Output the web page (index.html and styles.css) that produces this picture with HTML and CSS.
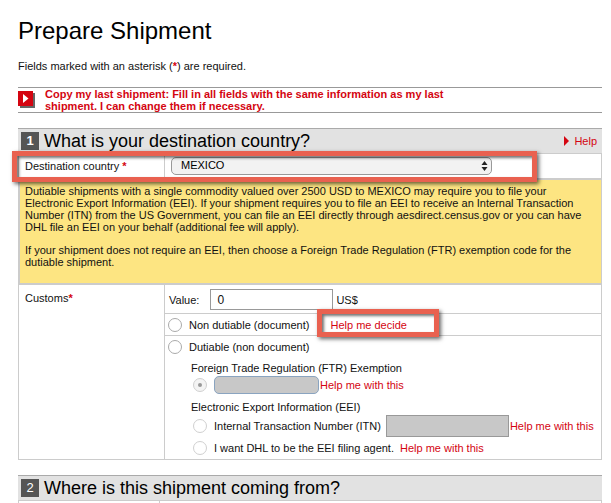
FILE: index.html
```html
<!DOCTYPE html>
<html lang="en">
<head>
    <meta charset="UTF-8">
    <title>Prepare Shipment</title>
    <link rel="stylesheet" href="styles.css">
</head>
<body>
    <h1>Prepare Shipment</h1>
    <p class="note">Fields marked with an asterisk (<span class="req bold">*</span>) are required.</p>

    <div class="copy-bar">
        <span class="arrow-btn">
            <svg width="15" height="15" viewBox="0 0 15 15"><path d="M5 3l5.500 4.500L5 12z" fill="#fff"/></svg>
        </span>
        <span class="copy-text">Copy my last shipment: Fill in all fields with the same information as my last shipment. I can change them if necessary.</span>
    </div>

    <div class="section-head first">
        <span class="num">1</span>
        <h2>What is your destination country?</h2>
        <a class="help-top"><i class="tri"></i>Help</a>
    </div>

    <div class="row dest-row">
        <div class="label">Destination country <span class="req bold">*</span></div>
        <div class="field">
            <div class="select-box">MEXICO
                <svg class="updown" width="7" height="12" viewBox="0 0 7 12"><path d="M3.500 1L6.500 5H.5zM3.500 11L.5 7h6z" fill="#222"/></svg>
            </div>
        </div>
    </div>

    <div class="notice">
        <p>Dutiable shipments with a single commodity valued over 2500 USD to MEXICO may require you to file your Electronic Export Information (EEI). If your shipment requires you to file an EEI to receive an Internal Transaction Number (ITN) from the US Government, you can file an EEI directly through aesdirect.census.gov or you can have DHL file an EEI on your behalf (additional fee will apply).</p>
        <p>If your shipment does not require an EEI, then choose a Foreign Trade Regulation (FTR) exemption code for the dutiable shipment.</p>
    </div>

    <div class="row customs">
        <div class="label">Customs<span class="req bold">*</span></div>
        <div class="field stack">
            <div class="line value-line">
                <span>Value:</span>
                <div class="text-input">0</div>
                <span>US$</span>
            </div>
            <div class="line doc-line">
                <i class="radio"></i>
                <span>Non dutiable (document)</span>
                <a class="help decide">Help me decide</a>
            </div>
            <div class="line dutiable-line">
                <i class="radio"></i>
                <span>Dutiable (non document)</span>
            </div>
            <div class="sub">
                <div class="sub-title">Foreign Trade Regulation (FTR) Exemption</div>
                <div class="line ftr-line">
                    <i class="radio small checked"></i>
                    <div class="gray-select"></div>
                    <a class="help">Help me with this</a>
                </div>
                <div class="sub-title eei">Electronic Export Information (EEI)</div>
                <div class="line itn-line">
                    <i class="radio small"></i>
                    <span>Internal Transaction Number (ITN)</span>
                    <div class="gray-input"></div>
                    <a class="help">Help me with this</a>
                </div>
                <div class="line agent-line">
                    <i class="radio small"></i>
                    <span>I want DHL to be the EEI filing agent.</span>
                    <a class="help">Help me with this</a>
                </div>
            </div>
        </div>
    </div>

    <div class="section-head second">
        <span class="num">2</span>
        <h2>Where is this shipment coming from?</h2>
    </div>
    <div class="row last-row">
        <div class="label"></div>
        <div class="field"></div>
    </div>

    <!-- red annotation boxes from the screenshot -->
    <div class="callout callout-dest"></div>
    <div class="callout callout-help"></div>
</body>
</html>
```

FILE: styles.css
```css
html, body {
    height: 503px;
    overflow: hidden;
}
body {
    position: relative;
    margin: 0;
    padding: 0 9px 0 18px;
    font-family: "Liberation Sans", Arial, sans-serif;
    font-size: 11px;
    color: #111;
    background: #fff;
}
h1 {
    margin: 0;
    padding-top: 15px;
    height: 31px;
    font-size: 24px;
    line-height: 31px;
    font-weight: normal;
    color: #000;
}
.note {
    margin: 0;
    padding-top: 13px;
    line-height: 14px;
}
.req {
    color: #d40511;
}
.bold {
    font-weight: bold;
}
.copy-bar {
    display: flex;
    margin-top: 14px;
    height: 24px;
    border-top: 1px solid #999;
    border-bottom: 1px solid #999;
}
.arrow-btn {
    width: 15px;
    height: 15px;
    margin-top: 3px;
    background: #d40511;
    box-shadow: 2px 2px 0 #666;
}
.arrow-btn svg {
    display: block;
}
.copy-text {
    width: 410px;
    margin-left: 12px;
    font-weight: bold;
    color: #d40511;
    line-height: 12px;
}
.section-head {
    display: flex;
    align-items: center;
    height: 24px;
    margin-top: 15px;
    background: #e2e2e2;
    border-top: 1px solid #aaa;
}
.num {
    width: 18px;
    height: 18px;
    margin-left: 3px;
    background: #555;
    color: #fff;
    font-size: 13px;
    line-height: 18px;
    text-align: center;
    font-weight: bold;
}
.second .num {
    font-weight: normal;
}
.section-head h2 {
    margin: 0 0 0 5px;
    font-size: 18px;
    font-weight: normal;
    color: #000;
}
.help-top {
    margin-left: auto;
    margin-right: 5px;
    color: #d40511;
    display: flex;
    align-items: center;
}
.tri {
    width: 0;
    height: 0;
    margin-right: 5px;
    border-left: 5px solid #d40511;
    border-top: 5px solid transparent;
    border-bottom: 5px solid transparent;
}
.row {
    display: flex;
    border-left: 1px solid #ccc;
    border-right: 1px solid #ccc;
}
.label {
    width: 139px;
    padding: 6px 0 0 6px;
    line-height: 14px;
    border-right: 1px solid #ccc;
}
.field {
    flex: 1;
}
.dest-row {
    height: 24px;
    border-top: 1px solid #ccc;
    border-bottom: 1px solid #ccc;
}
.dest-row .label {
    padding-top: 5px;
}
.select-box {
    position: relative;
    width: 310px;
    height: 16px;
    margin: 3px 0 0 6px;
    padding-left: 9px;
    border: 1px solid #999;
    border-radius: 5px;
    background: #f2f2f2;
    line-height: 14px;
    color: #000;
}
.updown {
    position: absolute;
    right: 3px;
    top: 2px;
}
.notice {
    height: 106px;
    padding: 0 6px 0 5px;
    box-sizing: border-box;
    background: #fde582;
    border: 1px solid #ccc;
    border-width: 1px 1px 2px 2px;
    line-height: 12px;
}
.notice p {
    margin: 5px 0 11px;
    width: 570px;
}
.notice p + p {
    margin-top: 0;
}
.customs {
    height: 174px;
    border-bottom: 1px solid #ccc;
}
.line {
    display: flex;
    align-items: center;
}
.value-line {
    height: 28px;
    padding-left: 4px;
    border-bottom: 1px solid #ccc;
}
.value-line span {
    padding-top: 2px;
}
.text-input {
    width: 115px;
    height: 19px;
    margin: 0 3px 0 11px;
    padding-left: 6px;
    border: 1px solid #999;
    line-height: 20px;
    font-size: 12px;
}
.doc-line {
    height: 21px;
    border-bottom: 1px solid #ccc;
}
.dutiable-line {
    height: 22px;
}
.doc-line, .dutiable-line {
    padding-left: 3px;
}
.radio {
    width: 12px;
    height: 12px;
    margin-right: 7px;
    border: 1px solid #aaa;
    border-radius: 50%;
    background: #fff;
    flex: none;
}
.radio.small {
    border-color: #d0d0d0;
}
.radio.checked {
    position: relative;
    background: #f4f4f4;
}
.radio.checked::after {
    content: "";
    position: absolute;
    left: 4px;
    top: 4px;
    width: 4px;
    height: 4px;
    border-radius: 50%;
    background: #999;
}
.help {
    color: #d40511;
}
.decide {
    margin-left: 21px;
}
.sub {
    padding: 3px 0 0 26px;
}
.sub-title {
    line-height: 14px;
}
.ftr-line {
    height: 20px;
    margin-left: 2px;
}
.gray-select {
    width: 103px;
    height: 16px;
    margin-right: 1px;
    border: 1px solid #8aa4c0;
    border-radius: 5px;
    background: #c8c8c8;
}
.eei {
    margin-top: 5px;
}
.itn-line {
    height: 24px;
    margin-left: 2px;
}
.gray-input {
    width: 121px;
    height: 20px;
    margin: 0 1px 0 5px;
    border: 1px solid #999;
    background: #c8c8c8;
}
.agent-line {
    height: 20px;
    margin-left: 2px;
}
.agent-line .help {
    margin-left: 6px;
}
.last-row {
    height: 10px;
    border-top: 1px solid #ccc;
}
.last-row .label {
    width: 134px;
    padding: 0 0 0 6px;
}
.callout {
    position: absolute;
    box-sizing: border-box;
    border: 5px solid #e96150;
    box-shadow: 2px 2px 4px rgba(0, 0, 0, 0.6), inset 2px 2px 3px rgba(0, 0, 0, 0.55);
}
.callout-dest {
    left: 12px;
    top: 151px;
    width: 525px;
    height: 31px;
}
.callout-help {
    left: 317px;
    top: 309px;
    width: 122px;
    height: 28px;
}
```
